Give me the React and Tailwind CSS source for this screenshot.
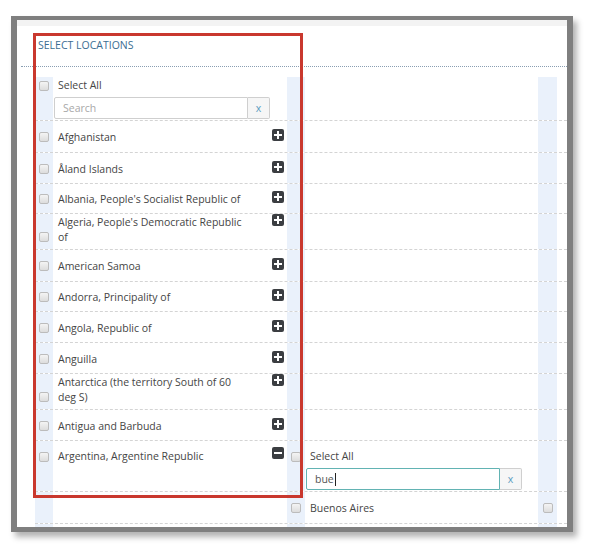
import React from 'react';

const rows = [
  { name: ['Afghanistan'], h: 'h-[32px]' },
  { name: ['Åland Islands'], h: 'h-[31px]' },
  { name: ["Albania, People's Socialist Republic of"], h: 'h-[30px]' },
  { name: ["Algeria, People's Democratic Republic", 'of'], h: 'h-[36px]' },
  { name: ['American Samoa'], h: 'h-[32px]' },
  { name: ['Andorra, Principality of'], h: 'h-[30px]' },
  { name: ['Angola, Republic of'], h: 'h-[31px]' },
  { name: ['Anguilla'], h: 'h-[31px]' },
  { name: ['Antarctica (the territory South of 60', 'deg S)'], h: 'h-[36px]' },
  { name: ['Antigua and Barbuda'], h: 'h-[31px]' },
];

const Check = ({ className = '' }) => (
  <span
    className={`block w-[10px] h-[10px] rounded-[2px] border border-[#bcbcbc] bg-gradient-to-b from-[#f4f4f4] to-[#dddddd] ${className}`}
  />
);

const Toggle = ({ open }) => (
  <span className="relative block w-[12px] h-[12px] rounded-[2px] bg-[#3b3e42] shrink-0">
    <span className="absolute left-[2px] top-[5px] w-[8px] h-[2px] bg-white" />
    {!open && <span className="absolute left-[5px] top-[2px] w-[2px] h-[8px] bg-white" />}
  </span>
);

const SearchBox = ({ value, focused }) => (
  <div className="flex h-[22px] w-[216px]">
    <div
      className={`flex-1 flex items-center pl-[8px] border rounded-l-[2px] text-[10.5px] ${
        focused ? 'border-[#62b3b3] text-[#555]' : 'border-[#cfcfcf] text-[#a8a8a8]'
      }`}
    >
      {value ? (
        <>
          <span>{value}</span>
          <span className="inline-block w-px h-[13px] bg-[#222] ml-[1px]" />
        </>
      ) : (
        'Search'
      )}
    </div>
    <div className="w-[22px] flex items-center justify-center border border-l-0 border-[#cfcfcf] bg-[#f6f6f6] rounded-r-[2px] text-[10.5px] text-[#5b9cc0]">
      x
    </div>
  </div>
);

const Strip = ({ w = 'w-[18px]', children, className = '' }) => (
  <div className={`${w} shrink-0 bg-[#eaf1fb] flex justify-center ${className}`}>{children}</div>
);

const Row = ({ h, c1, c2, c3, s1, s2, s3 }) => (
  <div className={`flex ${h} border-b border-dashed border-[#d4d4d4]`}>
    <Strip className={s1 || 'items-center pt-[1px]'}>{c1 && c1.cb}</Strip>
    <div className="w-[234px] shrink-0 flex">{c1 && c1.body}</div>
    <Strip className={s2 || 'items-center pt-[1px]'}>{c2 && c2.cb}</Strip>
    <div className="w-[233px] shrink-0 flex">{c2 && c2.body}</div>
    <Strip w="w-[19px]" className={s3 || 'items-center pt-[1px]'}>{c3}</Strip>
    <div className="flex-1" />
  </div>
);

export default function App() {
  return (
    <div className="w-[598px] h-[556px] bg-white pt-[16px] pl-[11px] text-[#454545]" style={{ fontFamily: '"Open Sans", "Liberation Sans", sans-serif' }}>
      <div className="relative w-[562px] h-[516px] border-x-[6px] border-t-[4px] border-b-[5px] border-[#7f7f7f] bg-white shadow-[4px_5px_6px_rgba(0,0,0,0.3)]">
        <div className="h-full flex flex-col overflow-hidden">
          <div className="h-[6px] shrink-0 bg-[#f3f3f3]" />
          <div className="h-[41px] shrink-0 ml-[4px] pl-[17px] pt-[11px] border-b border-dotted border-[#8a9eb2] text-[10.5px] leading-[16px] text-[#3b6d92] uppercase">
            Select Locations
          </div>
          <div className="mt-[10px] ml-[18px] flex-1 flex flex-col text-[10.5px] leading-[15px]">
            <Row
              h="h-[44px]"
              s1="items-start pt-[4px]"
              c1={{
                cb: <Check />,
                body: (
                  <div className="pt-[1px]">
                    <div className="pl-[5px]">Select All</div>
                    <div className="mt-[4px] ml-[1px]">
                      <SearchBox />
                    </div>
                  </div>
                ),
              }}
            />
            {rows.map((r) => {
              const two = r.name.length > 1;
              return (
                <Row
                  key={r.name[0]}
                  h={r.h}
                  s1={two ? 'items-start pt-[18px]' : 'items-center pt-[1px]'}
                  c1={{
                    cb: <Check />,
                    body: (
                      <div className={`flex w-full pl-[5px] ${two ? 'items-start pt-[1px]' : 'items-center pt-[2px]'}`}>
                        <div className="flex w-full items-start">
                          <span className="whitespace-nowrap">
                            {r.name.map((l, i) => (
                              <span key={i} className="block">
                                {l}
                              </span>
                            ))}
                          </span>
                          <span className="ml-auto mr-[3px] -mt-[1px]">
                            <Toggle />
                          </span>
                        </div>
                      </div>
                    ),
                  }}
                />
              );
            })}
            <Row
              h="h-[51px]"
              s1="items-start pt-[11px]"
              s2="items-start pt-[11px]"
              c1={{
                cb: <Check />,
                body: (
                  <div className="flex w-full items-start pl-[5px] pt-[8px]">
                    <span className="whitespace-nowrap">Argentina, Argentine Republic</span>
                    <span className="ml-auto mr-[3px] -mt-[2px]">
                      <Toggle open />
                    </span>
                  </div>
                ),
              }}
              c2={{
                cb: <Check />,
                body: (
                  <div className="pt-[8px]">
                    <div className="pl-[5px]">Select All</div>
                    <div className="mt-[4px] ml-[1px]">
                      <SearchBox value="bue" focused />
                    </div>
                  </div>
                ),
              }}
            />
            <Row
              h="h-[32px]"
              c2={{
                cb: <Check />,
                body: <div className="flex items-center pl-[5px] pt-[2px]">Buenos Aires</div>,
              }}
              c3={<Check />}
            />
            <div className="flex-1 flex">
              <Strip />
              <div className="w-[234px] shrink-0" />
              <Strip />
              <div className="w-[233px] shrink-0" />
              <Strip w="w-[19px]" />
            </div>
          </div>
        </div>
        <div className="absolute left-[16px] top-[13px] w-[270px] h-[465px] border-[3px] border-[#c9382e] pointer-events-none" />
      </div>
    </div>
  );
}
